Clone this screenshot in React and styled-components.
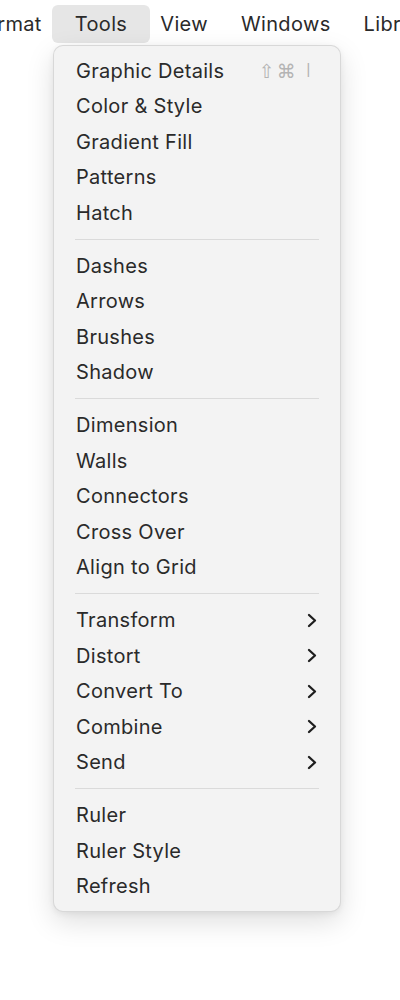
import React from "react";
import styled, { createGlobalStyle } from "styled-components";

const Global = createGlobalStyle`
  html, body { margin: 0; padding: 0; background: #ffffff; }
  body { font-family: Inter, "Noto Sans", "Liberation Sans", sans-serif; -webkit-font-smoothing: antialiased; }
`;

const Page = styled.div`
  width: 400px;
  height: 1000px;
  overflow: hidden;
  display: flex;
  flex-direction: column;
`;

const MenuBar = styled.div`
  display: flex;
  align-items: center;
  height: 38px;
  margin-top: 5px;
  margin-left: -43px;
  white-space: nowrap;
`;

const BarItem = styled.div`
  height: 38px;
  display: flex;
  align-items: center;
  padding: 0 ${(p) => (p.$active ? "22.5px" : "16.5px")};
  margin: 0 ${(p) => (p.$active ? "-6px" : "0")};
  border-radius: 6px;
  background: ${(p) => (p.$active ? "#e6e6e6" : "transparent")};
  font-size: 20px;
  color: #2a2a2a;
  letter-spacing: 0.35px;
`;

const Panel = styled.div`
  margin-top: 2px;
  margin-left: 53px;
  width: 288px;
  box-sizing: border-box;
  background: #f3f3f3;
  border: 1px solid rgba(0, 0, 0, 0.11);
  border-radius: 10px;
  box-shadow: 0 10px 28px rgba(0, 0, 0, 0.13), 0 2px 6px rgba(0, 0, 0, 0.06);
  padding: 7px 0;
  display: flex;
  flex-direction: column;
`;

const Row = styled.div`
  height: 35.5px;
  display: flex;
  align-items: center;
  justify-content: space-between;
  padding: 0 23px 0 22px;
  font-size: 20px;
  color: #2a2a2a;
  letter-spacing: 0.3px;
`;

const Separator = styled.div`
  height: 1px;
  background: #dadada;
  margin: 8px 21px 8.5px 21px;
`;

const Shortcut = styled.span`
  display: flex;
  align-items: center;
  gap: 2px;
  color: #b4b4b4;
  font-family: "DejaVu Sans", sans-serif;
  font-size: 19px;
  margin-right: 6px;
`;

const KeyChar = styled.span`
  font-family: Inter, "Noto Sans", sans-serif;
  font-weight: 300;
  font-size: 18px;
  margin-left: 8px;
`;

const Chevron = () => (
  <svg width="10" height="15" viewBox="0 0 10 15" fill="none">
    <path d="M2 2 L8 7.5 L2 13" stroke="#1e1e1e" strokeWidth="2.3" strokeLinecap="round" strokeLinejoin="round" />
  </svg>
);

const groups = [
  [
    { label: "Graphic Details", shortcut: true },
    { label: "Color & Style" },
    { label: "Gradient Fill" },
    { label: "Patterns" },
    { label: "Hatch" },
  ],
  [{ label: "Dashes" }, { label: "Arrows" }, { label: "Brushes" }, { label: "Shadow" }],
  [
    { label: "Dimension" },
    { label: "Walls" },
    { label: "Connectors" },
    { label: "Cross Over" },
    { label: "Align to Grid" },
  ],
  [
    { label: "Transform", sub: true },
    { label: "Distort", sub: true },
    { label: "Convert To", sub: true },
    { label: "Combine", sub: true },
    { label: "Send", sub: true },
  ],
  [{ label: "Ruler" }, { label: "Ruler Style" }, { label: "Refresh" }],
];

export default function App() {
  return (
    <Page>
      <Global />
      <MenuBar>
        <BarItem>Format</BarItem>
        <BarItem $active>Tools</BarItem>
        <BarItem>View</BarItem>
        <BarItem>Windows</BarItem>
        <BarItem>Library</BarItem>
      </MenuBar>
      <Panel>
        {groups.map((g, gi) => (
          <React.Fragment key={gi}>
            {gi > 0 && <Separator />}
            {g.map((it) => (
              <Row key={it.label}>
                <span>{it.label}</span>
                {it.shortcut && (
                  <Shortcut>
                    <span>⇧</span>
                    <span>⌘</span>
                    <KeyChar>I</KeyChar>
                  </Shortcut>
                )}
                {it.sub && <Chevron />}
              </Row>
            ))}
          </React.Fragment>
        ))}
      </Panel>
    </Page>
  );
}
